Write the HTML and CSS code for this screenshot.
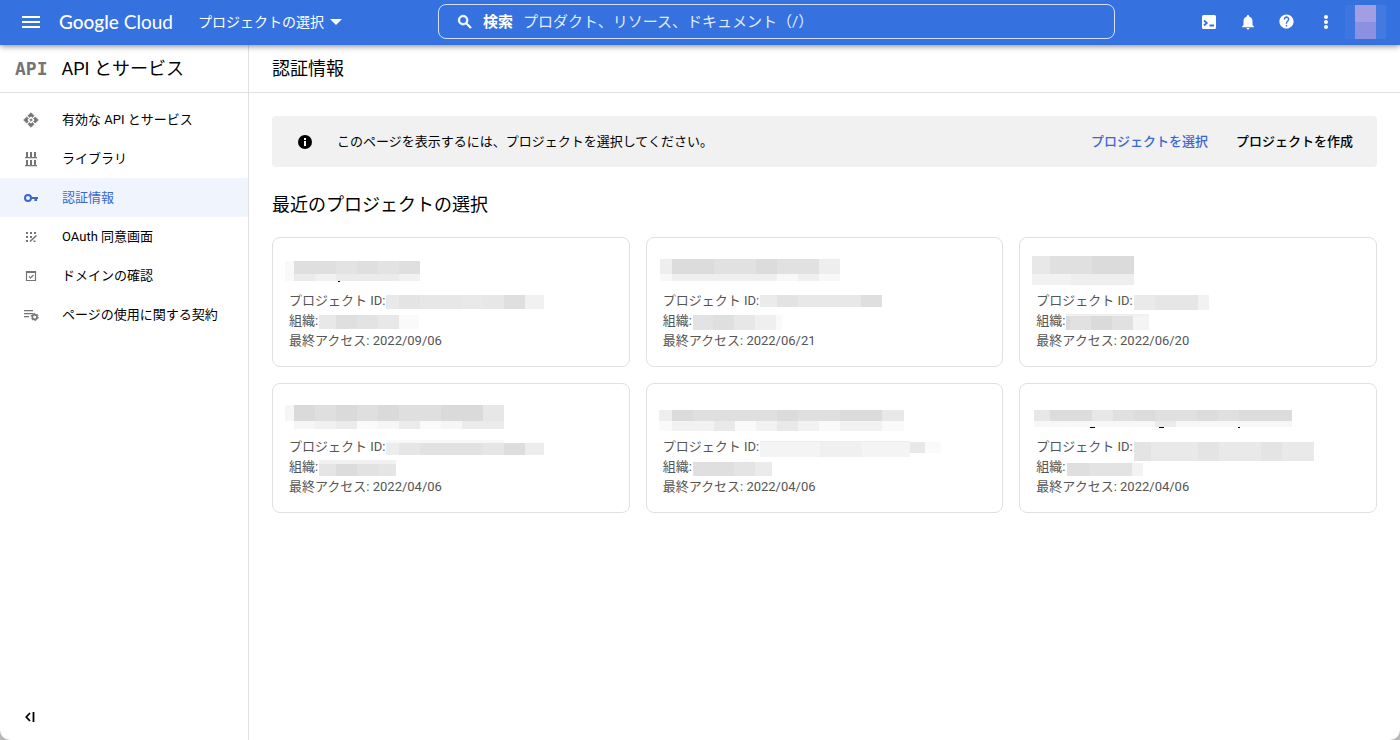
FILE: index.html
```html
<!DOCTYPE html>
<html lang="ja">
<head>
<meta charset="utf-8">
<title>認証情報 – API とサービス</title>
<link rel="stylesheet" href="styles.css">
</head>
<body>
<header class="topbar">
  <div class="topbar-start">
    <button class="icon-button menu-button" type="button" aria-label="メニュー">
      <svg width="18" height="12" viewBox="0 0 18 12"><path fill="currentColor" d="M0 0h18v2H0zM0 5h18v2H0zM0 10h18v2H0z"/></svg>
    </button>
    <a class="brand" href="#"><span class="brand-strong">Google</span> Cloud</a>
    <button class="project-picker" type="button">プロジェクトの選択
      <svg width="12" height="6" viewBox="0 0 12 6"><path fill="currentColor" d="M0 0h12L6 6z"/></svg>
    </button>
  </div>
  <form class="search" role="search">
    <svg width="18" height="18" viewBox="0 0 24 24"><path fill="currentColor" stroke="currentColor" stroke-width="1" d="M15.5 14h-.79l-.28-.27A6.47 6.47 0 0 0 16 9.500 6.500 6.500 0 1 0 9.500 16c1.610 0 3.090-.59 4.230-1.570l.27.28v.79l5 4.990L20.490 19zm-6 0C7.010 14 5 11.990 5 9.500S7.010 5 9.500 5 14 7.010 14 9.500 11.990 14 9.500 14z"/></svg>
    <label class="search-label" for="q">検索</label>
    <input class="search-input" id="q" type="text" placeholder="プロダクト、リソース、ドキュメント（/）">
  </form>
  <div class="topbar-end">
    <button class="icon-button" type="button" aria-label="Cloud Shell">
      <svg width="14" height="14" viewBox="0 0 14 14"><rect width="14" height="14" rx="1.500" fill="currentColor"/><path fill="none" stroke="#3572e0" stroke-width="1.800" d="M2 5.500l2.800 2.500L2 10.500M7.500 10.500H12"/></svg>
    </button>
    <button class="icon-button" type="button" aria-label="通知">
      <svg width="18" height="18" viewBox="0 0 24 24"><path fill="currentColor" d="M12 22c1.100 0 2-.9 2-2h-4c0 1.100.9 2 2 2zm6-6v-5c0-3.070-1.640-5.640-4.500-6.320V4a1.500 1.500 0 0 0-3 0v.68C7.630 5.360 6 7.920 6 11v5l-2 2v1h16v-1z"/></svg>
    </button>
    <button class="icon-button" type="button" aria-label="ヘルプ">
      <svg width="17" height="17" viewBox="0 0 24 24"><path fill="currentColor" d="M12 2C6.480 2 2 6.480 2 12s4.480 10 10 10 10-4.480 10-10S17.520 2 12 2zm1 17h-2v-2h2v2zm2.070-7.750-.9.92C13.450 12.900 13 13.500 13 15h-2v-.5c0-1.100.45-2.100 1.170-2.830l1.240-1.260A2 2 0 1 0 10 9H8a4 4 0 1 1 7.070 2.250z"/></svg>
    </button>
    <button class="icon-button" type="button" aria-label="その他">
      <svg width="4" height="14" viewBox="0 0 4 14"><g fill="currentColor"><circle cx="2" cy="2" r="2"/><circle cx="2" cy="7" r="2"/><circle cx="2" cy="12" r="2"/></g></svg>
    </button>
    <button class="avatar" type="button" aria-label="アカウント">
      <svg width="41" height="34" viewBox="0 0 41 34" shape-rendering="crispEdges"><path fill="#3d76df" d="M0 0h10v34H0z"/><path fill="#4479df" d="M31 0h10v34H31z"/><path fill="#a29ee4" d="M10 0h21v17H10z"/><path fill="#8b91e0" d="M10 17h21v17H10z"/></svg>
    </button>
  </div>
</header>
<div class="layout">
  <aside class="sidebar">
    <div class="sidebar-title"><span class="api-mark" aria-hidden="true">API</span><span>API とサービス</span></div>
    <nav class="nav">
      <a class="nav-item" href="#">
        <svg width="16" height="16" viewBox="0 0 24 24"><path fill="currentColor" stroke="currentColor" stroke-width="1" d="M14 12l-2 2-2-2 2-2 2 2zm-2-6l2.120 2.120 2.500-2.500L12 1 7.380 5.620l2.500 2.500L12 6zm-6 6l2.120-2.120-2.500-2.500L1 12l4.620 4.620 2.500-2.500L6 12zm12 0l-2.120 2.120 2.500 2.500L23 12l-4.620-4.620-2.500 2.500L18 12zm-6 6l-2.120-2.120-2.500 2.500L12 23l4.620-4.620-2.500-2.500L12 18z"/></svg>
        有効な API とサービス</a>
      <a class="nav-item" href="#">
        <svg width="16" height="16" viewBox="0 0 16 16"><path fill="currentColor" d="M2 6h12v1.300H2zM3 1h2v5H3zM7 1h2v5H7zM11 1h2v5h-2zM2 14h12v1.300H2zM3 9h2v5H3zM7 9h2v5H7zM11 9h2v5h-2z"/></svg>
        ライブラリ</a>
      <a class="nav-item nav-item-active" href="#" aria-current="page">
        <svg width="16" height="16" viewBox="0 0 16 16"><circle cx="5" cy="8" r="3" fill="none" stroke="currentColor" stroke-width="2"/><path fill="currentColor" d="M8 7h7v2h-1v2h-2.500V9H8z"/></svg>
        認証情報</a>
      <a class="nav-item" href="#">
        <svg width="16" height="16" viewBox="0 0 16 16"><path fill="currentColor" d="M3 3h2v2H3zM7 3h2v2H7zM11 3h2v2h-2zM3 7h2v2H3zM7 7h2v2H7zM3 11h2v2H3z"/><path fill="none" stroke="currentColor" stroke-width="1.600" d="M7 12.500L13.500 6.500M10.500 12.200h2"/></svg>
        OAuth 同意画面</a>
      <a class="nav-item" href="#">
        <svg width="16" height="16" viewBox="0 0 16 16"><path fill="none" stroke="currentColor" stroke-width="1.200" d="M3.500 3.500h9v9h-9zM6 8.500l1.500 1.500L10.500 7"/><path fill="currentColor" d="M3 3h10v2H3z"/></svg>
        ドメインの確認</a>
      <a class="nav-item" href="#">
        <svg width="16" height="16" viewBox="0 0 16 16"><path fill="currentColor" d="M1 3h9v1.300H1zM1 6h9v1.300H1zM1 9h5v1.300H1z"/><circle cx="11.700" cy="10" r="2.400" fill="none" stroke="currentColor" stroke-width="1.600"/><circle cx="11.700" cy="10" r="3.600" fill="none" stroke="currentColor" stroke-width="1" stroke-dasharray="1.900 1.870"/></svg>
        ページの使用に関する契約</a>
    </nav>
    <button class="collapse" type="button" aria-label="ナビゲーションを閉じる">
      <svg width="10" height="10" viewBox="0 0 10 10"><path fill="none" stroke="currentColor" stroke-width="1.800" d="M5 1L1.300 5 5 9M8.500 0v10"/></svg>
    </button>
  </aside>
  <main class="main">
    <h1 class="page-title">認証情報</h1>
    <div class="content">
      <section class="notice">
        <svg class="notice-icon" width="14" height="14" viewBox="0 0 14 14"><circle cx="7" cy="7" r="7"/><path fill="#fff" d="M6 6h2v5H6zM6 3h2v2H6z"/></svg>
        <p class="notice-text">このページを表示するには、プロジェクトを選択してください。</p>
        <button class="notice-action notice-action-primary" type="button">プロジェクトを選択</button>
        <button class="notice-action" type="button">プロジェクトを作成</button>
      </section>
      <h2 class="section-title">最近のプロジェクトの選択</h2>
      <div class="cards">
        <article class="card">
          <svg class="card-title" height="53"><path fill="#f9f9f9" d="M-4 23h9v20h-9z"/><path fill="#dfdfdf" d="M5 23h42v13H5zM68 23h21v13H68zM110 23h21v13h-21z"/><path fill="#e3e3e3" d="M47 23h21v13H47zM89 23h21v13H89z"/><path fill="#ebebeb" d="M5 36h21v7H5zM47 36h63v7H47z"/><path fill="#f1f1f1" d="M26 36h21v7H26zM110 36h21v7h-21z"/><path d="M49 43h2v1h-2z"/></svg>
          <div class="row">プロジェクト ID:<svg class="value" width="158" height="20"><path fill="#e9e9e9" d="M0 4h13v14H0zM76 4h21v14H76z"/><path fill="#e4e4e4" d="M13 4h21v14H13z"/><path fill="#e7e7e7" d="M34 4h42v14H34zM97 4h21v14H97z"/><path fill="#dfdfdf" d="M118 4h21v14h-21z"/><path fill="#f1f1f1" d="M139 4h19v14h-19z"/></svg></div>
          <div class="row">組織:<svg class="value" width="100" height="20"><path fill="#e8e8e8" d="M0 4h17v14H0zM59 4h21v14H59z"/><path fill="#dfdfdf" d="M17 4h21v14H17z"/><path fill="#e3e3e3" d="M38 4h21v14H38z"/><path fill="#fafafa" d="M80 4h20v14H80z"/></svg></div>
          <div class="row">最終アクセス: 2022/09/06</div>
        </article>
        <article class="card">
          <svg class="card-title" height="53"><path fill="#eee" d="M-3 21H9v15H-3zM156 21h21v15h-21z"/><path fill="#dcdcdc" d="M9 21h42v15H9zM93 21h21v15H93z"/><path fill="#e1e1e1" d="M51 21h42v15H51zM114 21h42v15h-42z"/><path fill="#f8f8f8" d="M-3 36H9v7H-3zM114 36h21v7h-21zM156 36h21v7h-21z"/><path fill="#efefef" d="M9 36h105v7H9zM135 36h21v7h-21z"/></svg>
          <div class="row">プロジェクト ID:<svg class="value" width="124" height="20"><path fill="#ebebeb" d="M0 4h17v12H0z"/><path fill="#e3e3e3" d="M17 4h21v12H17z"/><path fill="#e8e8e8" d="M38 4h63v12H38z"/><path fill="#dfdfdf" d="M101 4h21v12h-21z"/></svg></div>
          <div class="row">組織:<svg class="value" width="90" height="20"><path fill="#e3e3e3" d="M0 4h20v15H0z"/><path fill="#dfdfdf" d="M20 4h21v15H20z"/><path fill="#e7e7e7" d="M41 4h21v15H41z"/><path fill="#efefef" d="M62 4h21v15H62z"/><path fill="#fafafa" d="M83 4h6v15h-6z"/></svg></div>
          <div class="row">最終アクセス: 2022/06/21</div>
        </article>
        <article class="card">
          <svg class="card-title" height="53"><path fill="#e8e8e8" d="M-4 18h18v18H-4z"/><path fill="#e0e0e0" d="M14 18h42v18H14z"/><path fill="#dbdbdb" d="M56 18h42v18H56z"/><path fill="#f2f2f2" d="M-4 36h39v11H-4z"/><path fill="#eee" d="M35 36h63v11H35z"/></svg>
          <div class="row">プロジェクト ID:<svg class="value" width="76" height="20"><path fill="#eaeaea" d="M0 4h21v15H0z"/><path fill="#e6e6e6" d="M21 4h43v15H21z"/><path fill="#f2f2f2" d="M64 4h11v15H64z"/></svg></div>
          <div class="row">組織:<svg class="value" width="86" height="20"><path fill="#f0f0f0" d="M0 3h83v2H0z"/><path fill="#dadada" d="M0 5h4v14H0zM25 5h21v14H25z"/><path fill="#e1e1e1" d="M4 5h21v14H4zM46 5h21v14H46z"/><path fill="#f4f4f4" d="M67 5h16v14H67z"/></svg></div>
          <div class="row">最終アクセス: 2022/06/20</div>
        </article>
        <article class="card">
          <svg class="card-title" height="53"><path fill="#f6f6f6" d="M-4 21h9v16h-9zM5 37h21v8H5zM89 37h21v8H89zM152 37h21v8h-21z"/><path fill="#dadada" d="M5 21h21v16H5zM47 21h21v16H47zM89 21h21v16H89zM152 21h42v16h-42z"/><path fill="#dfdfdf" d="M26 21h21v16H26zM68 21h21v16H68zM110 21h42v16h-42z"/><path fill="#e7e7e7" d="M194 21h21v16h-21z"/><path fill="#ebebeb" d="M47 37h21v8H47zM110 37h21v8h-21zM173 37h42v8h-42z"/><path fill="#f1f1f1" d="M26 37h21v8H26z"/><path fill="#fafafa" d="M68 37h21v8H68zM131 37h21v8h-21z"/></svg>
          <div class="row">プロジェクト ID:<svg class="value" width="158" height="20"><path fill="#f8f8f8" d="M0 3h118v3H0z"/><path fill="#ededed" d="M0 6h13v12H0zM139 6h19v12h-19z"/><path fill="#e6e6e6" d="M13 6h21v12H13zM97 6h21v12H97z"/><path fill="#e2e2e2" d="M34 6h63v12H34z"/><path fill="#ddd" d="M118 6h21v12h-21z"/></svg></div>
          <div class="row">組織:<svg class="value" width="77" height="20"><path fill="#f0f0f0" d="M0 3h77v4H0z"/><path fill="#e5e5e5" d="M0 7h17v12H0zM59 7h18v12H59z"/><path fill="#dcdcdc" d="M17 7h21v12H17z"/><path fill="#e2e2e2" d="M38 7h21v12H38z"/></svg></div>
          <div class="row">最終アクセス: 2022/04/06</div>
        </article>
        <article class="card">
          <svg class="card-title" height="53"><path fill="#eee" d="M-4 26H9v11H-4z"/><path fill="#dbdbdb" d="M9 26h21v11H9zM114 26h21v11h-21zM177 26h42v11h-42z"/><path fill="#dfdfdf" d="M30 26h84v11H30zM135 26h42v11h-42z"/><path fill="#e8e8e8" d="M219 26h22v11h-22z"/><path fill="#fafafa" d="M-4 37H9v10H-4zM72 37h21v10H72zM156 37h21v10h-21zM219 37h22v10h-22z"/><path fill="#f2f2f2" d="M9 37h42v10H9zM93 37h21v10H93zM135 37h21v10h-21zM177 37h42v10h-42z"/><path fill="#e9e9e9" d="M51 37h21v10H51zM114 37h21v10h-21z"/></svg>
          <div class="row">プロジェクト ID:<svg class="value" width="184" height="20"><path fill="#ededed" d="M0 4h150v1H0z"/><path fill="#f4f4f4" d="M0 5h60v15H0zM102 5h48v15h-48z"/><path fill="#f0f0f0" d="M60 5h42v15H60z"/><path fill="#e8e8e8" d="M150 5h15v11h-15z"/><path fill="#fafafa" d="M165 5h16v11h-16z"/></svg></div>
          <div class="row">組織:<svg class="value" width="80" height="20"><path fill="#dfdfdf" d="M0 5h41v14H0z"/><path fill="#e4e4e4" d="M41 5h21v14H41z"/><path fill="#ebebeb" d="M62 5h17v14H62z"/></svg></div>
          <div class="row">最終アクセス: 2022/04/06</div>
        </article>
        <article class="card">
          <svg class="card-title" height="53"><path fill="#e7e7e7" d="M-2 26h16v11H-2zM56 26h21v11H56z"/><path fill="#dcdcdc" d="M14 26h42v11H14zM98 26h21v11H98zM161 26h21v11h-21zM203 26h53v11h-53z"/><path fill="#e0e0e0" d="M77 26h21v11H77zM119 26h42v11h-42zM182 26h21v11h-21z"/><path fill="#f7f7f7" d="M-2 37h121v6H-2zM140 37h116v6H140z"/><path fill="#ebebeb" d="M119 37h21v6h-21z"/><path d="M54 43h5v1h-5zM123 43h5v1h-5zM202 43h2v1h-2z"/></svg>
          <div class="row">プロジェクト ID:<svg class="value" width="181" height="20"><path fill="#e4e4e4" d="M0 5h17v19H0zM64 5h21v19H64zM127 5h21v19h-21z"/><path fill="#e9e9e9" d="M17 5h47v19H17zM85 5h42v19H85zM148 5h32v19h-32z"/></svg></div>
          <div class="row">組織:<svg class="value" width="78" height="20"><path fill="#dfdfdf" d="M1 6h23v13H1z"/><path fill="#e3e3e3" d="M24 6h42v13H24z"/><path fill="#f3f3f3" d="M66 6h11v13H66z"/></svg></div>
          <div class="row">最終アクセス: 2022/04/06</div>
        </article>
      </div>
    </div>
  </main>
</div>
</body>
</html>
```
FILE: styles.css
```css
*, *::before, *::after { box-sizing: border-box; }

html { background: #b8b8b8; }

body {
  margin: 0;
  min-height: 100vh;
  display: flex;
  flex-direction: column;
  overflow: hidden;
  border-radius: 0 0 10px 10px;
  background: #fff;
  color: #000;
  font: 13px/20px Roboto, "Noto Sans CJK JP", sans-serif;
}

button {
  border: 0;
  padding: 0;
  background: none;
  color: inherit;
  font: inherit;
  cursor: pointer;
}

a { color: inherit; text-decoration: none; }
svg { display: block; flex: none; }

/* Top bar */
.topbar {
  position: relative;
  z-index: 1;
  height: 45px;
  display: grid;
  grid-template-columns: 438px minmax(0, 1fr) auto;
  align-items: center;
  padding: 0 14px 2px 0;
  background: #3572e0;
  color: #fff;
  box-shadow: 0 1px 6px rgba(0, 0, 0, 0.5);
}

.topbar-start, .topbar-end { display: flex; align-items: center; }
.topbar-end { padding-left: 74px; }

.icon-button {
  width: 39px;
  height: 39px;
  display: flex;
  align-items: center;
  justify-content: center;
}

.menu-button { margin-left: 11px; }

.brand {
  margin-left: 9px;
  font: 19px/24px Lato, sans-serif;
  white-space: nowrap;
}
.brand-strong { font-weight: 500; }

.project-picker {
  display: flex;
  align-items: center;
  gap: 6px;
  margin-left: 25px;
  font-size: 14px;
  white-space: nowrap;
}

.search {
  height: 35px;
  display: flex;
  align-items: center;
  padding: 0 16px 0 17px;
  border: 1px solid #d5e1f8;
  border-radius: 8px;
  font-size: 15px;
}
.search-label { margin-left: 9px; font-weight: 700; }
.search-input {
  flex: 1;
  min-width: 0;
  margin-left: 10px;
  padding: 0;
  border: 0;
  outline: 0;
  background: none;
  color: inherit;
  font: inherit;
}
.search-input::placeholder { color: #e4ecfb; opacity: 1; }

/* Layout */
.layout { flex: 1; display: flex; }

.sidebar {
  flex: none;
  width: 249px;
  display: flex;
  flex-direction: column;
  border-right: 1px solid #e0e0e0;
}

.sidebar-title, .page-title {
  height: 48px;
  display: flex;
  align-items: center;
  margin: 0;
  border-bottom: 1px solid #e0e0e0;
  font-size: 18px;
  font-weight: 400;
}

.sidebar-title { gap: 14px; padding-left: 15px; }
.api-mark {
  color: #757575;
  font: 700 18px/20px "DejaVu Sans Mono", monospace;
}

.nav { padding-top: 7px; }
.nav-item {
  height: 39px;
  display: flex;
  align-items: center;
  gap: 23px;
  padding-left: 23px;
}
.nav-item svg { color: #757575; }
.nav-item-active { background: #eff4fd; }
.nav-item-active, .nav-item-active svg { color: #3b67d1; }

.collapse { margin: auto auto 18px 25px; }

/* Main area */
.main { flex: 1; min-width: 0; }
.page-title { padding-left: 23px; }
.content { padding: 23px 23px 24px; }

.notice {
  min-height: 51px;
  display: flex;
  align-items: center;
  padding: 0 24px 0 26px;
  border-radius: 4px;
  background: #f1f1f1;
}
.notice-text { flex: 1; margin: 0 0 0 25px; }
.notice-action { margin-left: 28px; font-weight: 500; }
.notice-action-primary { color: #3b67d1; }

.section-title {
  margin: 24px 0 18px;
  font-size: 18px;
  line-height: 28px;
  font-weight: 400;
}

.cards {
  display: grid;
  grid-template-columns: repeat(3, minmax(0, 1fr));
  gap: 16px;
}

.card {
  padding: 0 16px 15px;
  border: 1px solid #e0e0e0;
  border-radius: 8px;
  color: #555;
}
.card svg { overflow: visible; shape-rendering: crispEdges; }
.card-title { width: 100%; }
.row { display: flex; gap: 1px; white-space: nowrap; }
```
